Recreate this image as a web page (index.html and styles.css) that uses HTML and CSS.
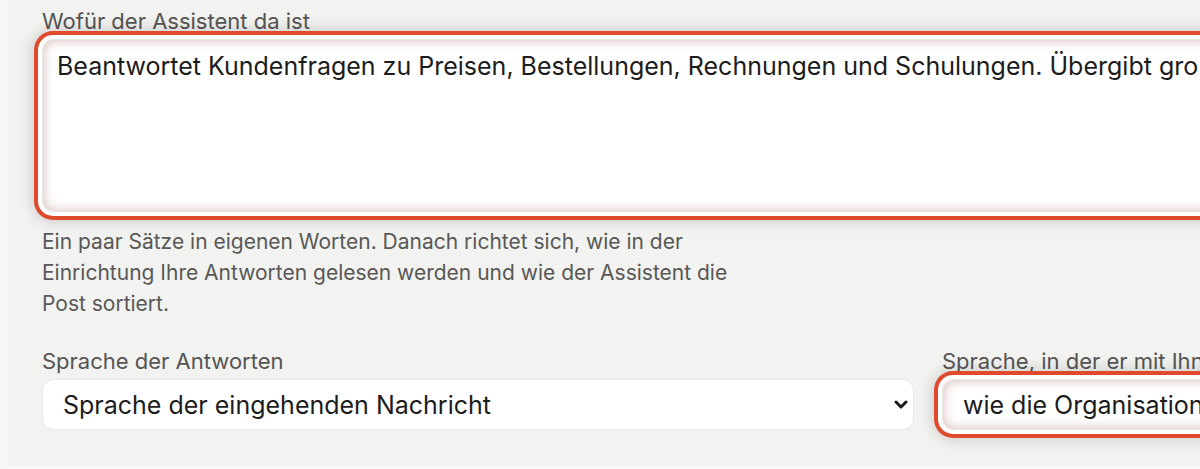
FILE: index.html
```html
<!DOCTYPE html>
<html lang="de">
<head>
<meta charset="utf-8">
<title>Assistent</title>
<link rel="stylesheet" href="styles.css">
</head>
<body>
<div class="panel">
  <div class="field field-wide">
    <label class="label" for="purpose">Wofür der Assistent da ist</label>
    <textarea id="purpose" class="textarea highlight">Beantwortet Kundenfragen zu Preisen, Bestellungen, Rechnungen und Schulungen. Übergibt große Aufträge an das Team.</textarea>
    <p class="help">Ein paar Sätze in eigenen Worten. Danach richtet sich, wie in der Einrichtung Ihre Antworten gelesen werden und wie der Assistent die Post sortiert.</p>
  </div>
  <div class="field">
    <label class="label" for="lang1">Sprache der Antworten</label>
    <div class="select-wrap">
      <select id="lang1" class="select">
        <option>Sprache der eingehenden Nachricht</option>
      </select>
      <svg class="chevron" width="14" height="9" viewBox="0 0 14 9" aria-hidden="true"><path d="M2 2l5 5 5-5" fill="none" stroke="#1a1a1a" stroke-width="3" stroke-linecap="round" stroke-linejoin="round"/></svg>
    </div>
  </div>
  <div class="field">
    <label class="label" for="lang2">Sprache, in der er mit Ihnen spricht</label>
    <div class="select-wrap">
      <select id="lang2" class="select highlight">
        <option>wie die Organisation</option>
      </select>
      <svg class="chevron" width="14" height="9" viewBox="0 0 14 9" aria-hidden="true"><path d="M2 2l5 5 5-5" fill="none" stroke="#1a1a1a" stroke-width="3" stroke-linecap="round" stroke-linejoin="round"/></svg>
    </div>
  </div>
</div>
</body>
</html>
```
FILE: styles.css
```css
html, body {
  margin: 0;
  padding: 0;
}
body {
  background: #f8f8f6;
  overflow: hidden;
  font-family: Inter, "Noto Sans", sans-serif;
  width: 1200px;
  height: 469px;
}
.panel {
  margin-left: 8px;
  width: 1840px;
  box-sizing: border-box;
  background: #f2f2f0;
  padding: 8px 34px 35px 34px;
  display: grid;
  grid-template-columns: 872px 872px;
  column-gap: 28px;
  row-gap: 29px;
}
.field {
  display: flex;
  flex-direction: column;
  min-width: 0;
}
.field-wide {
  grid-column: 1 / 3;
}
.label {
  font-size: 22px;
  line-height: 26px;
  color: #555553;
  margin-bottom: 5px;
  white-space: nowrap;
}
.textarea {
  box-sizing: border-box;
  height: 173px;
  width: 100%;
  resize: none;
  border: 1px solid #e6e6e2;
  border-radius: 11px;
  background: #fff;
  font-family: Inter, "Noto Sans", sans-serif;
  font-size: 25px;
  line-height: 1.3;
  color: #1c1c1c;
  padding: 10px 14px 7px 14px;
  margin: 0;
  outline: none;
  overflow: hidden;
}
.help {
  margin: 14px 0 0 0;
  max-width: 730px;
  font-size: 21px;
  line-height: 31px;
  color: #585856;
}
.select-wrap {
  position: relative;
}
.select {
  -webkit-appearance: none;
  appearance: none;
  display: block;
  box-sizing: border-box;
  width: 100%;
  height: 51px;
  border: 1px solid #e8e8e4;
  border-radius: 11px;
  background: #fff;
  font-family: Inter, "Noto Sans", sans-serif;
  font-size: 25px;
  color: #1c1c1c;
  padding: 0 40px 0 20px;
  margin: 0;
  outline: none;
}
.chevron {
  position: absolute;
  right: 6px;
  top: 21px;
  pointer-events: none;
}
.highlight {
  position: relative;
  z-index: 1;
  box-shadow:
    inset 0 0 12px rgba(140, 70, 60, 0.38),
    0 0 0 4px #ffffff,
    0 0 0 8px #e04a2c,
    0 0 14px 10px rgba(0, 0, 0, 0.15);
}
```
